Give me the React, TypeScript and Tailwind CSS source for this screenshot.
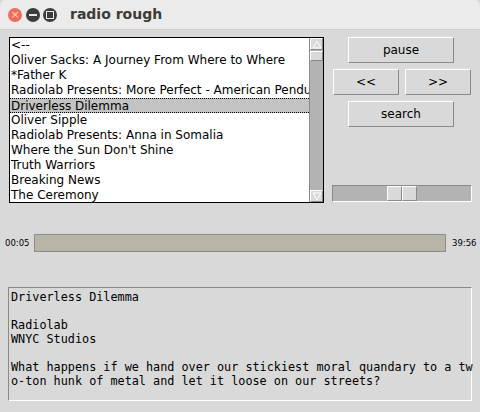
import React from 'react';

const episodes = [
  '<--',
  'Oliver Sacks: A Journey From Where to Where',
  '*Father K',
  'Radiolab Presents: More Perfect - American Pendulum',
  'Driverless Dilemma',
  'Oliver Sipple',
  'Radiolab Presents: Anna in Somalia',
  "Where the Sun Don't Shine",
  'Truth Warriors',
  'Breaking News',
  'The Ceremony',
];

const details = [
  'Driverless Dilemma',
  '',
  'Radiolab',
  'WNYC Studios',
  '',
  'What happens if we hand over our stickiest moral quandary to a tw',
  'o-ton hunk of metal and let it loose on our streets?',
];

function TkButton({ label, className }: { label: string; className: string }) {
  return (
    <button
      className={`h-[26px] bg-[#d9d9d9] border border-t-white border-l-white border-r-[#8a8a8a] border-b-[#8a8a8a] text-[12px] text-black leading-none ${className}`}
    >
      {label}
    </button>
  );
}

export default function App() {
  return (
    <div className="w-[480px] h-[412px] bg-[#d9d9d9] flex flex-col overflow-hidden font-['DejaVu_Sans',sans-serif]">
      {/* window title bar */}
      <div className="h-[30px] bg-[#ebebeb] rounded-t-[6px] flex items-center pl-[8px] border-b border-[#d0d0d0]">
        <div className="w-[14px] h-[14px] rounded-full bg-[#ef6b5a] flex items-center justify-center text-[#fbd0c8] text-[11px] leading-none">
          ×
        </div>
        <div className="w-[14px] h-[14px] rounded-full bg-[#3c3c3c] ml-[4px] flex items-center justify-center">
          <div className="w-[8px] h-[2px] bg-[#e8e8e8]" />
        </div>
        <div className="w-[14px] h-[14px] rounded-full bg-[#3c3c3c] ml-[3px] flex items-center justify-center">
          <div className="w-[8px] h-[8px] border-[1.5px] border-[#e8e8e8]" />
        </div>
        <span className="ml-[13px] text-[14px] font-bold text-[#3c3b37]">radio rough</span>
      </div>

      {/* list + controls */}
      <div className="flex mt-[7px] pl-[9px]">
        <div className="w-[315px] h-[166px] border border-black bg-white flex overflow-hidden">
          <div className="flex-1 overflow-hidden pt-[0px]">
            {episodes.map((e, i) => (
              <div
                key={e}
                className={`h-[15px] pl-[1px] text-[12px] leading-[15px] text-black whitespace-nowrap ${
                  i === 4 ? 'bg-[#c3c3c3] border-y border-dotted border-black leading-[13px]' : ''
                }`}
              >
                {e}
              </div>
            ))}
          </div>
          <div className="w-[14px] bg-[#b3b3b3] border-l border-[#8a8a8a] flex flex-col">
            <div className="h-[12px] bg-[#d9d9d9] border border-t-white border-l-white border-r-[#8a8a8a] border-b-[#8a8a8a] flex items-center justify-center">
              <svg width="10" height="9" viewBox="0 0 10 9">
                <path d="M5 1 L9 8 L1 8 Z" fill="#d9d9d9" stroke="#ffffff" strokeWidth="1" />
              </svg>
            </div>
            <div className="h-[10px] mt-[1px] bg-[#d9d9d9] border border-t-white border-l-white border-r-[#8a8a8a] border-b-[#8a8a8a]" />
            <div className="flex-1" />
            <div className="h-[12px] bg-[#d9d9d9] border border-t-white border-l-white border-r-[#8a8a8a] border-b-[#8a8a8a] flex items-center justify-center">
              <svg width="10" height="9" viewBox="0 0 10 9">
                <path d="M1 1 L9 1 L5 8 Z" fill="#d9d9d9" stroke="#ffffff" strokeWidth="1" />
              </svg>
            </div>
          </div>
        </div>

        <div className="ml-[8px] w-[140px] flex flex-col">
          <TkButton label="pause" className="w-[106px] ml-[16px]" />
          <div className="flex gap-[6px] mt-[6px] ml-[1px]">
            <TkButton label="<<" className="w-[66px]" />
            <TkButton label=">>" className="w-[66px]" />
          </div>
          <TkButton label="search" className="w-[106px] ml-[16px] mt-[6px]" />
          <div className="mt-[58px] h-[17px] w-[140px] bg-[#b3b3b3] border border-t-[#8a8a8a] border-l-[#8a8a8a] border-r-white border-b-white flex items-stretch">
            <div className="ml-[54px] flex">
              <div className="w-[15px] bg-[#d9d9d9] border border-t-white border-l-white border-r-[#8a8a8a] border-b-[#8a8a8a]" />
              <div className="w-[15px] bg-[#d9d9d9] border border-t-white border-l-white border-r-[#8a8a8a] border-b-[#8a8a8a]" />
            </div>
          </div>
        </div>
      </div>

      {/* progress */}
      <div className="flex items-center mt-[31px] h-[18px]">
        <span className="w-[34px] pl-[5px] text-[8.5px] text-black">00:05</span>
        <div className="w-[412px] h-[18px] bg-[#b9b4a8] border border-[#8f8c84]" />
        <span className="pl-[6px] text-[8.5px] text-black">39:56</span>
      </div>

      {/* details */}
      <div className="ml-[8px] mt-[35px] w-[464px] h-[114px] border border-t-[#8a8a8a] border-l-[#8a8a8a] border-r-white border-b-white pl-[2px] pt-[2px] font-['DejaVu_Sans_Mono',monospace] text-[11.8px] leading-[14px] text-black whitespace-pre">
        {details.map((l, i) => (
          <div key={i} className="h-[14px]">
            {l}
          </div>
        ))}
      </div>
    </div>
  );
}
